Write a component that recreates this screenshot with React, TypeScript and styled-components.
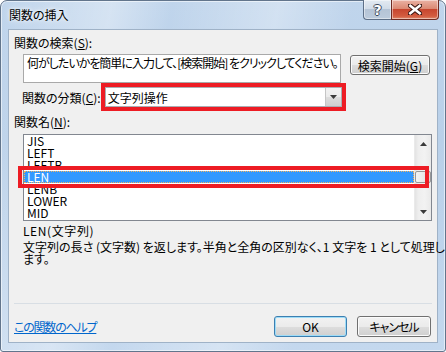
import React from "react";
import styled, { createGlobalStyle } from "styled-components";

const FONT = `"Noto Sans CJK JP", "Noto Sans", sans-serif`;

const Global = createGlobalStyle`
  html, body { margin: 0; padding: 0; background: #ffffff; }
  body { width: 446px; height: 352px; overflow: hidden; }
  *, *::before, *::after { box-sizing: border-box; }
`;

const Window = styled.div`
  width: 446px;
  height: 352px;
  display: flex;
  flex-direction: column;
  border: 1px solid #62758c;
  border-radius: 7px 7px 3px 3px;
  background:
    linear-gradient(100deg, rgba(255,255,255,0) 0%, rgba(255,255,255,0.35) 22%, rgba(255,255,255,0) 34%, rgba(255,255,255,0.3) 55%, rgba(255,255,255,0) 70%),
    linear-gradient(180deg, #c0d5ec 0%, #b9d0e9 40%, #c4d8ee 100%);
  box-shadow: inset 0 0 0 1px rgba(255,255,255,0.55);
  padding: 0 7px 8px 7px;
  font-family: ${FONT};
  font-size: 12px;
  font-feature-settings: "palt";
  color: #000;
`;

const TitleBar = styled.div`
  height: 28px;
  flex: 0 0 28px;
  display: flex;
  align-items: flex-start;
  justify-content: space-between;
`;

const TitleText = styled.div`
  margin: 7px 0 0 1px;
  line-height: 13px;
  font-size: 12px;
  color: #000;
  text-shadow: 0 0 6px rgba(255,255,255,0.9), 0 0 3px rgba(255,255,255,0.9);
`;

const CaptionButtons = styled.div`
  display: flex;
  margin-top: -1px;
  margin-right: -1px;
`;

const CaptionButton = styled.div<{ $kind: "help" | "close" }>`
  height: 20px;
  width: ${(p) => (p.$kind === "help" ? "28px" : "48px")};
  display: flex;
  align-items: center;
  justify-content: center;
  border: 1px solid ${(p) => (p.$kind === "help" ? "#5d6f87" : "#6e2b22")};
  border-top: none;
  ${(p) => (p.$kind === "help" ? "border-right: none;" : "")}
  border-radius: ${(p) => (p.$kind === "help" ? "0 0 0 4px" : "0 0 4px 0")};
  background: ${(p) =>
    p.$kind === "help"
      ? "linear-gradient(180deg, #e3eaf2 0%, #d2dce8 45%, #b5c4d6 50%, #bccbdc 100%)"
      : "linear-gradient(180deg, #eab2a4 0%, #db8a74 45%, #c7462f 50%, #d35c40 85%, #de8a6c 100%)"};
  box-shadow: inset 0 0 0 1px rgba(255,255,255,0.45);
`;

const HelpGlyph = styled.span`
  font-family: "DejaVu Sans", sans-serif;
  font-weight: bold;
  font-size: 14px;
  line-height: 14px;
  color: #fff;
  text-shadow: -1px 0 #3d4a5c, 1px 0 #3d4a5c, 0 -1px #3d4a5c, 0 1px #3d4a5c;
`;

const Panel = styled.div`
  flex: 1;
  display: flex;
  flex-direction: column;
  background: #f0f0f0;
  border: 1px solid #9fb2c7;
  padding: 0 0 5px 0;
`;

const Label = styled.div<{ $indent?: number; $top?: number }>`
  margin-left: ${(p) => p.$indent ?? 5}px;
  margin-top: ${(p) => p.$top ?? 0}px;
  line-height: 13px;
  white-space: nowrap;
`;

const Key = styled.span`
  text-decoration: underline;
  text-underline-offset: 1px;
`;

const SearchRow = styled.div`
  display: flex;
  align-items: flex-start;
  gap: 9px;
  margin: 5px 0 0 14px;
`;

const SearchBox = styled.div`
  width: 318px;
  height: 29px;
  border: 1px solid #a9a9a9;
  background: #fff;
  padding: 1px 3px;
  line-height: 13px;
  letter-spacing: -1px;
  white-space: nowrap;
  overflow: hidden;
`;

const PushButton = styled.div<{ $w: number; $default?: boolean; $tight?: number }>`
  width: ${(p) => p.$w}px;
  height: ${(p) => (p.$default !== undefined ? 21 : 20)}px;
  margin-top: ${(p) => (p.$default !== undefined ? 0 : 1)}px;
  display: flex;
  align-items: center;
  justify-content: center;
  line-height: 13px;
  letter-spacing: ${(p) => p.$tight ?? 0}px;
  border: 1px solid ${(p) => (p.$default ? "#3c7fb1" : "#707070")};
  border-radius: 3px;
  background: linear-gradient(180deg, #f2f2f2 0%, #ebebeb 50%, #dddddd 51%, #cfcfcf 100%);
  box-shadow: inset 0 0 0 1px ${(p) => (p.$default ? "#9edcf7" : "#fbfbfb")};
  white-space: nowrap;
`;

const CategoryRow = styled.div`
  display: flex;
  align-items: center;
  margin-left: 13px;
`;

const CategoryLabel = styled.div`
  flex: 0 0 76px;
  line-height: 13px;
  white-space: nowrap;
`;

const RedFrame = styled.div`
  position: relative;
  z-index: 1;
  border: 4px solid #ed1c24;
`;

const Combo = styled.div`
  width: 237px;
  height: 20px;
  display: flex;
  align-items: center;
  justify-content: space-between;
  border: 1px solid #abadb3;
  background: #fff;
  padding: 0 0 0 2px;
  line-height: 13px;
`;

const DropButton = styled.div`
  width: 16px;
  height: 18px;
  display: flex;
  align-items: center;
  justify-content: center;
  border-left: 1px solid #c5c5c5;
  background: linear-gradient(180deg, #f2f2f2 0%, #ebebeb 50%, #dddddd 51%, #cfcfcf 100%);
`;

const ListBox = styled.div`
  margin: 6px 0 0 14px;
  width: 409px;
  height: 87px;
  border: 1px solid #828790;
  background: #fff;
  display: flex;
`;

const Items = styled.div`
  flex: 1;
  display: flex;
  flex-direction: column;
`;

const Item = styled.div<{ $selected?: boolean }>`
  position: relative;
  height: 12px;
  line-height: 12px;
  padding-left: 3px;
  white-space: nowrap;
  ${(p) =>
    p.$selected
      ? `
    background: #3399ff;
    color: #fff;
    outline: 1px dotted #f7b25a;
    outline-offset: -1px;
  `
      : ""}
`;

const ItemMark = styled.div`
  position: absolute;
  left: -6px;
  top: -5px;
  right: -15px;
  bottom: -5px;
  border: 4px solid #ed1c24;
  z-index: 2;
  pointer-events: none;
`;

const ScrollBar = styled.div`
  width: 17px;
  display: flex;
  flex-direction: column;
  background: linear-gradient(90deg, #e3e3e3 0%, #eeeeee 20%, #f2f2f2 60%, #e9e9e9 100%);
  border-left: 1px solid #eaeaea;
`;

const ScrollArrow = styled.div`
  height: 17px;
  display: flex;
  align-items: center;
  justify-content: center;
`;

const ScrollTrack = styled.div<{ $offset: number }>`
  flex: 1;
  padding-top: ${(p) => p.$offset}px;
`;

const Thumb = styled.div`
  width: 16px;
  height: 12px;
  border: 1px solid #979797;
  border-radius: 2px;
  background: linear-gradient(90deg, #f3f3f3 0%, #e9e9e9 50%, #d9d9d9 100%);
`;

const FuncTitle = styled.div`
  margin: 3px 0 0 14px;
  line-height: 13px;
  letter-spacing: 0.6px;
`;

const Description = styled.div`
  margin: 4px 0 0 14px;
  line-height: 12px;
  white-space: nowrap;
`;

const Separator = styled.div`
  margin: auto 0 0 5px;
  width: 418px;
  height: 1px;
  background: #d8dee4;
`;

const Footer = styled.div`
  margin: 12px 6px 0 5px;
  display: flex;
  align-items: center;
`;

const HelpLink = styled.a`
  color: #0066cc;
  text-decoration: underline;
  text-underline-offset: 1px;
  line-height: 13px;
  letter-spacing: -1.2px;
  margin-right: auto;
  cursor: pointer;
`;

const ButtonGroup = styled.div`
  display: flex;
  gap: 10px;
`;

const Tri = ({ down }: { down?: boolean }) => (
  <svg width="7" height="4" viewBox="0 0 7 4">
    <polygon points={down ? "0,0 7,0 3.5,4" : "0,4 7,4 3.5,0"} fill="#3a3a3a" />
  </svg>
);

const CloseGlyph = () => (
  <svg width="14" height="11" viewBox="0 0 14 11">
    <path d="M2 1.5 L12 9.5 M12 1.5 L2 9.5" stroke="#3a1611" strokeWidth="4.6" strokeLinecap="square" fill="none" />
    <path d="M2.3 1.8 L11.7 9.2 M11.7 1.8 L2.3 9.2" stroke="#ffffff" strokeWidth="2.6" strokeLinecap="square" fill="none" />
  </svg>
);

const functions = ["JIS", "LEFT", "LEFTB", "LEN", "LENB", "LOWER", "MID"];

export default function App() {
  return (
    <>
      <Global />
      <Window>
        <TitleBar>
          <TitleText>関数の挿入</TitleText>
          <CaptionButtons>
            <CaptionButton $kind="help">
              <HelpGlyph>?</HelpGlyph>
            </CaptionButton>
            <CaptionButton $kind="close">
              <CloseGlyph />
            </CaptionButton>
          </CaptionButtons>
        </TitleBar>
        <Panel>
          <Label $top={6}>
            関数の検索(<Key>S</Key>):
          </Label>
          <SearchRow>
            <SearchBox>何がしたいかを簡単に入力して、[検索開始] をクリックしてください。</SearchBox>
            <PushButton $w={80}>
              検索開始(<Key>G</Key>)
            </PushButton>
          </SearchRow>
          <CategoryRow>
            <CategoryLabel>
              関数の分類(<Key>C</Key>):
            </CategoryLabel>
            <RedFrame>
              <Combo>
                <span>文字列操作</span>
                <DropButton>
                  <Tri down />
                </DropButton>
              </Combo>
            </RedFrame>
          </CategoryRow>
          <Label $top={4}>
            関数名(<Key>N</Key>):
          </Label>
          <ListBox>
            <Items>
              {functions.map((f) => (
                <Item key={f} $selected={f === "LEN"}>
                  {f}
                  {f === "LEN" && <ItemMark />}
                </Item>
              ))}
            </Items>
            <ScrollBar>
              <ScrollArrow>
                <Tri />
              </ScrollArrow>
              <ScrollTrack $offset={19}>
                <Thumb />
              </ScrollTrack>
              <ScrollArrow>
                <Tri down />
              </ScrollArrow>
            </ScrollBar>
          </ListBox>
          <FuncTitle>LEN(文字列)</FuncTitle>
          <Description>
            文字列の長さ (文字数) を返します。半角と全角の区別なく、1 文字を 1 として処理し
            <br />
            ます。
          </Description>
          <Separator />
          <Footer>
            <HelpLink>この関数のヘルプ</HelpLink>
            <ButtonGroup>
              <PushButton $w={73} $default>
                OK
              </PushButton>
              <PushButton $w={74} $default={false} $tight={-1}>
                キャンセル
              </PushButton>
            </ButtonGroup>
          </Footer>
        </Panel>
      </Window>
    </>
  );
}
